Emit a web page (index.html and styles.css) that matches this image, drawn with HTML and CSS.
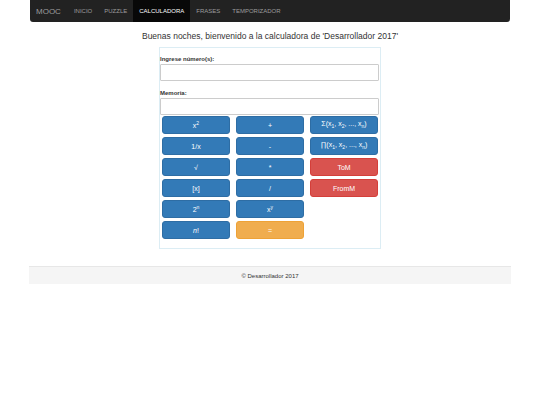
FILE: index.html
```html
<!DOCTYPE html>
<html lang="es">
<head>
<meta charset="utf-8">
<title>Calculadora</title>
<link rel="stylesheet" href="styles.css">
</head>
<body>
<nav class="navbar">
  <span class="brand">MOOC</span>
  <a class="nav-item">INICIO</a>
  <a class="nav-item">PUZZLE</a>
  <a class="nav-item active">CALCULADORA</a>
  <a class="nav-item">FRASES</a>
  <a class="nav-item">TEMPORIZADOR</a>
</nav>
<h1 class="greeting">Buenas noches, bienvenido a la calculadora de 'Desarrollador 2017'</h1>
<div class="panel">
  <label class="field-label">Ingrese número(s):</label>
  <input class="field" type="text">
  <label class="field-label second">Memoria:</label>
  <input class="field" type="text">
  <div class="keys">
    <button class="key blue">x<sup>2</sup></button>
    <button class="key blue">+</button>
    <button class="key blue">Σ(x<sub>1</sub>, x<sub>2</sub>, ..., x<sub>n</sub>)</button>
    <button class="key blue">1/x</button>
    <button class="key blue">-</button>
    <button class="key blue">∏(x<sub>1</sub>, x<sub>2</sub>, ..., x<sub>n</sub>)</button>
    <button class="key blue">√</button>
    <button class="key blue">*</button>
    <button class="key red">ToM</button>
    <button class="key blue">[x]</button>
    <button class="key blue">/</button>
    <button class="key red">FromM</button>
    <button class="key blue">2<sup>n</sup></button>
    <button class="key blue">x<sup>y</sup></button>
    <span class="key-empty"></span>
    <button class="key blue"><i>n</i>!</button>
    <button class="key orange">=</button>
  </div>
</div>
<footer class="footer">© Desarrollador 2017</footer>
</body>
</html>
```
FILE: styles.css
```css
* { box-sizing: border-box; }
body {
  margin: 0;
  font-family: "Liberation Sans", Arial, sans-serif;
  color: #333;
  background: #fff;
}
.navbar {
  margin: 0 30px;
  height: 22px;
  background: #222;
  border-radius: 0 0 3px 3px;
  display: flex;
  align-items: stretch;
}
.brand {
  display: flex;
  align-items: center;
  padding: 0 7px 0 6px;
  font-size: 8px;
  color: #9d9d9d;
}
.nav-item {
  display: flex;
  align-items: center;
  padding: 0 6px;
  font-size: 6px;
  color: #9d9d9d;
}
.nav-item.active {
  background: #080808;
  color: #fff;
}
.greeting {
  margin: 8px 0 5px;
  font-size: 8.5px;
  line-height: 12px;
  font-weight: normal;
  text-align: center;
}
.panel {
  width: 222px;
  margin: 0 auto;
  border: 1px solid #dcedf4;
  padding: 7px 1px 9px 0;
  display: flex;
  flex-direction: column;
}
.field-label {
  font-size: 6px;
  line-height: 8px;
  font-weight: bold;
  color: #333;
  margin: 0 0 1px 0;
}
.field-label.second { margin-top: 8px; }
.field {
  height: 17px;
  width: 100%;
  margin: 0;
  border: 1px solid #ccc;
  border-radius: 1px;
  padding: 0;
  background: #fff;
}
.keys {
  display: grid;
  grid-template-columns: repeat(3, 68px);
  grid-auto-rows: 18px;
  gap: 3px 6px;
  padding: 0 0 0 2px;
  margin-top: 1px;
}
.key {
  margin: 0;
  border: 1px solid transparent;
  border-radius: 3px;
  color: #fff;
  font-family: "Liberation Sans", Arial, sans-serif;
  font-size: 7px;
  padding: 0;
  line-height: 1;
}
.key sup, .key sub { font-size: 5px; }
.blue { background: #337ab7; border-color: #2e6da4; }
.red { background: #d9534f; border-color: #d43f3a; }
.orange { background: #f0ad4e; border-color: #eea236; }
.footer {
  margin: 17px 29px 0;
  height: 18px;
  background: #f5f5f5;
  border-top: 1px solid #e7e7e7;
  font-size: 6px;
  display: flex;
  align-items: center;
  justify-content: center;
}
```
